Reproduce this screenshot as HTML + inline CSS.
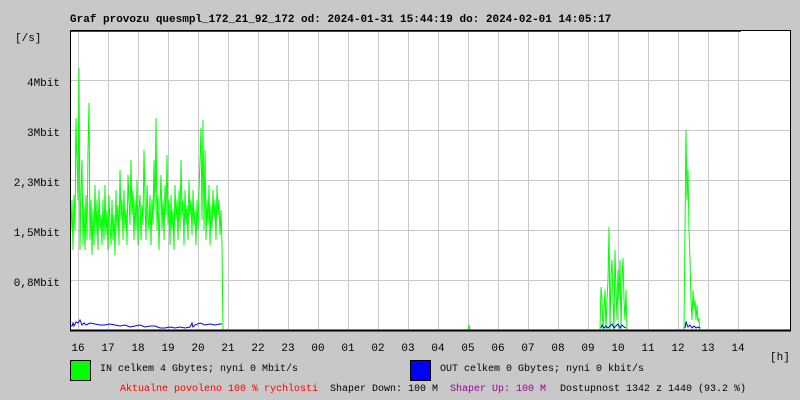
<!DOCTYPE html>
<html><head><meta charset="utf-8"><style>
html,body{margin:0;padding:0;background:#c8c8c8;}
body{width:800px;height:400px;overflow:hidden;position:relative;}
svg{position:absolute;left:0;top:0;}
text{font-family:"Liberation Mono",monospace;font-size:11px;}
.s{font-size:10px;}
</style></head><body>
<svg width="800" height="400" xmlns="http://www.w3.org/2000/svg">
<rect x="0" y="0" width="800" height="400" fill="#c8c8c8"/>
<text x="70" y="22" font-weight="bold" font-size="11.2">Graf provozu quesmpl_172_21_92_172 od: 2024-01-31 15:44:19 do: 2024-02-01 14:05:17</text>
<rect x="70" y="30" width="720" height="300" fill="#fff"/>
<g stroke="#c8c8c8" stroke-width="1">
<path d="M78.5 31V330M108.5 31V330M138.5 31V330M168.5 31V330M198.5 31V330M228.5 31V330M258.5 31V330M288.5 31V330M318.5 31V330M348.5 31V330M378.5 31V330M408.5 31V330M438.5 31V330M468.5 31V330M498.5 31V330M528.5 31V330M558.5 31V330M588.5 31V330M618.5 31V330M648.5 31V330M678.5 31V330M708.5 31V330M738.5 31V330"/>
<path d="M70 80.5H790M70 130.5H790M70 180.5H790M70 230.5H790M70 280.5H790"/>
</g>
<polyline fill="none" stroke="#00ff00" stroke-width="1" points="71,230 72,200 73,250 74,195 75,230 76,118 77,160 78,200 79,68 80,250 81,190 82,160 83,245 84,205 85,250 86,195 87,240 88,150 89,103 90,240 91,200 92,255 93,210 94,245 95,185 96,235 97,200 98,250 99,190 100,230 101,215 102,245 103,200 104,240 105,185 106,235 107,210 108,250 109,195 110,225 111,245 112,200 113,240 114,215 115,255 116,190 117,230 118,205 119,245 120,170 121,220 122,200 123,240 124,190 125,230 126,210 127,245 128,175 129,200 130,225 131,160 132,215 133,190 134,240 135,200 136,230 137,180 138,245 139,210 140,195 141,240 142,205 143,225 144,150 145,200 146,240 147,185 148,215 149,230 150,195 151,245 152,200 153,225 154,160 155,210 156,118 157,230 158,195 159,250 160,205 161,175 162,230 163,200 164,240 165,185 166,215 167,155 168,225 169,200 170,245 171,195 172,230 173,210 174,250 175,185 176,220 177,200 178,240 179,190 180,230 181,160 182,215 183,200 184,245 185,190 186,225 187,205 188,240 189,180 190,215 191,200 192,235 193,190 194,225 195,210 196,245 197,200 198,230 199,190 200,160 201,128 202,220 203,120 204,230 205,150 206,240 207,200 208,225 209,185 210,245 211,205 212,230 213,190 214,220 215,200 216,240 217,185 218,215 219,200 220,235 221,210 222,245 223,330 224,330"/>
<polyline fill="none" stroke="#00ff00" points="468,330 469,325 470,330"/>
<polyline fill="none" stroke="#00ff00" points="600,330 601,287 602,300 603,330 604,310 605,290 606,330 607,300 608,280 609,227 610,330 611,275 612,260 613,300 614,330 615,250 616,290 617,320 618,270 619,300 620,260 621,330 622,280 623,258 624,300 625,320 626,290 627,330"/>
<polyline fill="none" stroke="#00ff00" points="684,330 685,230 686,130 687,200 688,170 689,230 690,260 691,300 692,320 693,290 694,310 695,300 696,320 697,305 698,322 699,318 700,330"/>
<polyline fill="none" stroke="#0000ff" points="71,326 72,326 73,323 74,326 76,322 78,323 80,320 82,325 84,323 86,325 90,323 95,324 100,325 105,325 110,324 115,325 120,326 125,325 130,327 135,326 140,325 145,327 150,326 155,326 160,328 165,328 170,327 175,328 180,327 185,328 190,327 192,323 193,327 195,325 200,323 205,325 210,324 215,325 220,324 222,324"/>
<polyline fill="none" stroke="#0000ff" points="601,328 602,325 604,328 606,326 608,328 612,324 614,328 618,324 620,328 622,325 624,327 626,328"/>
<polyline fill="none" stroke="#0000ff" points="685,328 686,322 688,327 690,325 692,328 694,326 696,328 698,327 700,328"/>
<rect x="70.5" y="30.5" width="720" height="300" fill="none" stroke="#000"/>
<line x1="70" y1="330.5" x2="791" y2="330.5" stroke="#000" stroke-width="2"/>
<line x1="71" y1="31.5" x2="741" y2="31.5" stroke="#e00000"/>
<g text-anchor="end">
<text x="60" y="86">4Mbit</text>
<text x="60" y="136">3Mbit</text>
<text x="60" y="186">2,3Mbit</text>
<text x="60" y="236">1,5Mbit</text>
<text x="60" y="286">0,8Mbit</text>
</g>
<text x="15" y="41">[/s]</text>
<g text-anchor="middle">
<text x="78" y="351">16</text><text x="108" y="351">17</text><text x="138" y="351">18</text><text x="168" y="351">19</text><text x="198" y="351">20</text><text x="228" y="351">21</text><text x="258" y="351">22</text><text x="288" y="351">23</text><text x="318" y="351">00</text><text x="348" y="351">01</text><text x="378" y="351">02</text><text x="408" y="351">03</text><text x="438" y="351">04</text><text x="468" y="351">05</text><text x="498" y="351">06</text><text x="528" y="351">07</text><text x="558" y="351">08</text><text x="588" y="351">09</text><text x="618" y="351">10</text><text x="648" y="351">11</text><text x="678" y="351">12</text><text x="708" y="351">13</text><text x="738" y="351">14</text>
</g>
<text x="770" y="360">[h]</text>
<rect x="70.5" y="360.5" width="20" height="20" fill="#00ff00" stroke="#000"/>
<text class="s" x="100" y="371">IN celkem 4 Gbytes; nyní 0 Mbit/s</text>
<rect x="410.5" y="360.5" width="20" height="20" fill="#0000ff" stroke="#000"/>
<text class="s" x="440" y="371">OUT celkem 0 Gbytes; nyní 0 kbit/s</text>
<text class="s" x="120" y="391" fill="#ff0000">Aktualne povoleno 100 % rychlosti</text>
<text class="s" x="330" y="391">Shaper Down: 100 M</text>
<text class="s" x="450" y="391" fill="#990099">Shaper Up: 100 M</text>
<text class="s" x="560" y="391">Dostupnost 1342 z 1440 (93.2 %)</text>
</svg>
</body></html>
